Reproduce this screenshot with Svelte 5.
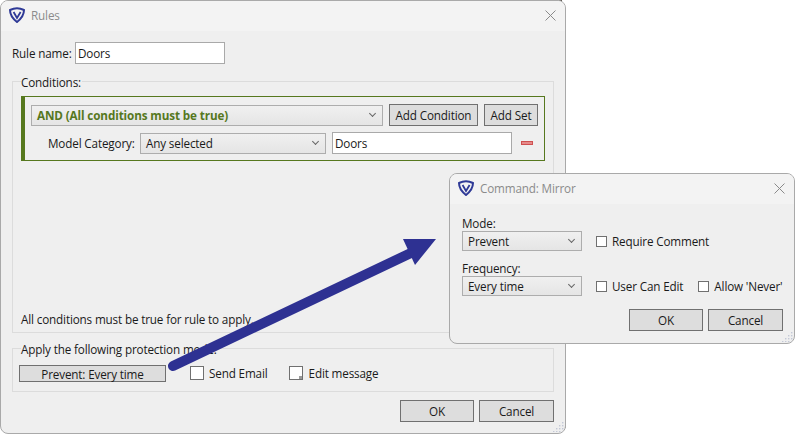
<script lang="ts">
  // Two overlapping dialogs on a blank desktop, with a callout arrow between them.
  const shaft = { x1: 173, y1: 366, x2: 413, y2: 252 };
</script>

{#snippet logo()}
  <svg class="logo" viewBox="0 0 16 16" aria-hidden="true">
    <path d="M1 3 Q8 -0.4 15 3 Q15 9.5 8 15 Q1 9.5 1 3 Z" fill="none" stroke="#2f3a97" stroke-width="2" stroke-linejoin="round" />
    <path d="M4.6 5 L8 11 L11.6 5" fill="none" stroke="#2f3a97" stroke-width="1.8" />
  </svg>
{/snippet}

{#snippet close()}
  <svg class="close" viewBox="0 0 11 11" aria-hidden="true">
    <path d="M.5 .5 L10.5 10.5 M10.5 .5 L.5 10.5" stroke="#8a8a8a" stroke-width="1" fill="none" />
  </svg>
{/snippet}

{#snippet grip()}
  <svg class="grip" viewBox="0 0 12 12" aria-hidden="true">
    {#each [[10, 2], [7, 5], [10, 5], [4, 8], [7, 8], [10, 8], [1, 11], [4, 11], [7, 11], [10, 11]] as [x, y]}
      <rect {x} {y} width="1.4" height="1.4" fill="#c3c8d6" />
    {/each}
  </svg>
{/snippet}

<div class="desktop">
  <div class="top-noise"></div>
  <div class="side-line"></div>

  <section class="win rules">
    <header class="title">
      {@render logo()}
      <span>Rules</span>
      {@render close()}
    </header>
    <div class="body">
      <div class="name-row">
        <span class="name-label">Rule name:</span>
        <div class="input name">Doors</div>
      </div>

      <fieldset class="conditions">
        <legend>Conditions:</legend>
        <div class="set">
          <div class="set-row">
            <div class="select and"><b>AND (All conditions must be true)</b><i class="chev"></i></div>
            <button class="add-cond">Add Condition</button>
            <button class="add-set">Add Set</button>
          </div>
          <div class="set-row second">
            <span class="cat-label">Model Category:</span>
            <div class="select cat">Any selected<i class="chev"></i></div>
            <div class="input val">Doors</div>
            <span class="minus"></span>
          </div>
        </div>
        <p class="note">All conditions must be true for rule to apply.</p>
      </fieldset>

      <fieldset class="protect">
        <legend>Apply the following protection mode:</legend>
        <div class="protect-row">
          <button class="mode">Prevent: Every time</button>
          <span class="box"></span><span class="send">Send Email</span>
          <span class="box edit"><i></i></span><span>Edit message</span>
        </div>
      </fieldset>

      <div class="actions">
        <button class="act">OK</button>
        <button class="act">Cancel</button>
      </div>
    </div>
    {@render grip()}
  </section>

  <section class="win mirror">
    <header class="title">
      {@render logo()}
      <span>Command: Mirror</span>
      {@render close()}
    </header>
    <div class="body">
      <div class="lbl">Mode:</div>
      <div class="cmd-row">
        <div class="select small">Prevent<i class="chev"></i></div>
        <span class="box sm"></span><span>Require Comment</span>
      </div>
      <div class="lbl freq">Frequency:</div>
      <div class="cmd-row">
        <div class="select small">Every time<i class="chev"></i></div>
        <span class="box sm"></span><span class="uce">User Can Edit</span>
        <span class="box sm"></span><span>Allow 'Never'</span>
      </div>
      <div class="actions">
        <button class="act">OK</button>
        <button class="act">Cancel</button>
      </div>
    </div>
    {@render grip()}
  </section>

  <svg class="arrow" viewBox="0 0 795 434" aria-hidden="true">
    <line x1={shaft.x1} y1={shaft.y1} x2={shaft.x2} y2={shaft.y2} stroke="#2e3192" stroke-width="10" stroke-linecap="round" />
    <polygon points="403,239 436,239 415,265" fill="#2e3192" />
  </svg>
</div>

<style>
  :global(body) {
    margin: 0;
    background: #fff;
  }
  .desktop {
    position: relative;
    width: 795px;
    height: 434px;
    overflow: hidden;
    background: #fff;
    font: 11.7px/16px "Open Sans", "Noto Sans", sans-serif;
    letter-spacing: -0.15px;
    color: #1a1a1a;
    white-space: nowrap;
  }
  .top-noise {
    position: absolute;
    left: 90px;
    top: 0;
    width: 472px;
    height: 1px;
    background: repeating-linear-gradient(90deg, #8d8678 0 7px, #d8d6d0 7px 10px, #5f5a54 10px 14px, #c9c9c9 14px 17px);
  }
  .side-line {
    position: absolute;
    left: 565px;
    top: 8px;
    width: 1px;
    height: 420px;
    background: #9a9a9a;
  }
  .win {
    position: absolute;
    box-sizing: border-box;
    display: flex;
    flex-direction: column;
    background: #efefef;
    border: 1px solid #a9a9a9;
    border-radius: 8px;
    overflow: hidden;
  }
  .rules {
    left: 0;
    top: 0;
    width: 566px;
    height: 434px;
  }
  .mirror {
    left: 449px;
    top: 173px;
    width: 346px;
    height: 171px;
  }
  .title {
    flex: none;
    box-sizing: border-box;
    display: flex;
    align-items: center;
    height: 30px;
    padding: 0 9px 2px 8px;
    background: #f3f3f3;
    color: #8b8b8b;
  }
  .logo {
    width: 16px;
    height: 16px;
    margin-right: 6px;
  }
  .close {
    width: 11px;
    height: 11px;
    margin-left: auto;
  }
  .grip {
    position: absolute;
    right: 1px;
    bottom: 1px;
    width: 12px;
    height: 12px;
  }
  .body {
    flex: 1;
    display: flex;
    flex-direction: column;
    min-height: 0;
  }
  .rules .body {
    padding: 11px 11px 0;
  }
  .name-row {
    display: flex;
    align-items: center;
    height: 22px;
  }
  .name-label {
    width: 63px;
  }
  .input {
    box-sizing: border-box;
    background: #fff;
    border: 1px solid #a9a9a9;
    padding: 1px 0 0 2px;
    line-height: 19px;
    height: 22px;
  }
  .name {
    width: 150px;
  }
  fieldset {
    margin: 0;
    min-width: 0;
    padding: 0;
    border: 1px solid #dcdcdc;
  }
  legend {
    padding: 2px 1px 0 0;
    line-height: 16px;
  }
  .conditions {
    box-sizing: border-box;
    height: 261px;
    margin-top: 8px;
    padding: 0 8px;
  }
  .set {
    box-sizing: border-box;
    height: 65px;
    margin-top: 6px;
    padding: 7px 5px 0 6px;
    border: 1px solid #56781e;
    border-left-width: 4px;
  }
  .set-row {
    display: flex;
    align-items: center;
    height: 22px;
  }
  .second {
    margin-top: 6px;
  }
  .select {
    position: relative;
    box-sizing: border-box;
    display: flex;
    align-items: center;
    height: 21px;
    padding-left: 5px;
    background: linear-gradient(#f0f0f0, #e5e5e5);
    border: 1px solid #adadad;
  }
  .chev {
    position: absolute;
    right: 7px;
    top: 5px;
    width: 4px;
    height: 4px;
    border-right: 1px solid #666;
    border-bottom: 1px solid #666;
    transform: rotate(45deg);
  }
  .and {
    width: 352px;
    color: #56781e;
  }
  .and b {
    letter-spacing: -0.12px;
  }
  button {
    box-sizing: border-box;
    padding: 0;
    font: inherit;
    letter-spacing: inherit;
    color: inherit;
    background: #dddddd;
    border: 1px solid #707070;
  }
  .add-cond {
    width: 89px;
    height: 22px;
    margin-left: 6px;
  }
  .add-set {
    width: 54px;
    height: 22px;
    margin-left: 6px;
  }
  .cat-label {
    margin-left: 17px;
    width: 92px;
  }
  .cat {
    width: 186px;
  }
  .val {
    width: 180px;
    margin-left: 6px;
  }
  .minus {
    box-sizing: border-box;
    width: 12px;
    height: 4px;
    margin-left: 9px;
    background: #e58a8a;
    border: 1px solid #cf5050;
  }
  .note {
    margin: 150px 0 0;
  }
  .protect {
    box-sizing: border-box;
    height: 53px;
    margin-top: 6px;
    padding: 0 6px;
  }
  .protect legend {
    margin-left: 2px;
  }
  .protect-row {
    display: flex;
    align-items: center;
    height: 18px;
    margin-top: 7px;
  }
  .mode {
    width: 147px;
    height: 17px;
    margin-right: 24px;
    padding-top: 1px;
    line-height: 15px;
  }
  .box {
    flex: none;
    box-sizing: border-box;
    position: relative;
    width: 14px;
    height: 14px;
    margin-right: 5px;
    background: #fff;
    border: 1px solid #707070;
  }
  .send {
    margin-right: 21px;
  }
  .edit {
    margin-right: 6px;
  }
  .edit i {
    position: absolute;
    right: 0;
    bottom: 0;
    width: 3px;
    height: 3px;
    background: #9a9a9a;
  }
  .actions {
    display: flex;
    justify-content: flex-end;
    gap: 5px;
    margin-top: 8px;
  }
  .act {
    width: 75px;
    height: 22px;
  }
  .act:first-child {
    width: 74px;
  }
  .mirror .body {
    padding: 11px 11px 0 12px;
  }
  .lbl {
    line-height: 16px;
  }
  .freq {
    margin-top: 9px;
  }
  .cmd-row {
    display: flex;
    align-items: center;
    height: 20px;
  }
  .small {
    width: 120px;
    height: 20px;
    margin-right: 14px;
  }
  .box.sm {
    width: 11px;
    height: 11px;
    margin-right: 5px;
  }
  .uce {
    margin-right: 15px;
  }
  .mirror .actions {
    margin-top: 13px;
  }
  .arrow {
    position: absolute;
    inset: 0;
    width: 795px;
    height: 434px;
    pointer-events: none;
  }
</style>
